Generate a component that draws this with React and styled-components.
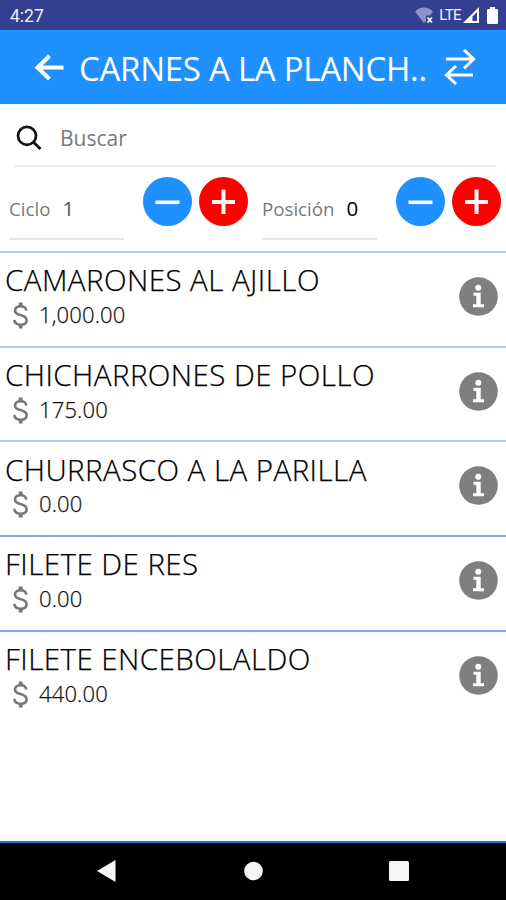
import React, { useState } from 'react';
import styled, { createGlobalStyle } from 'styled-components'

const GlobalStyle = createGlobalStyle`
  * {
    box-sizing: border-box;
  }
  body {
    margin: 0;
    background: #fff;
    font-family: 'Open Sans', 'Noto Sans', sans-serif;
  }
`

const Screen = styled.div`
  display: flex;
  flex-direction: column;
  width: 506px;
  height: 900px;
  overflow: hidden;
  background: #fff;
`;
const StatusBar = styled.div`
  display: flex;
  align-items: center;
  justify-content: space-between;
  height: 30px;
  padding: 2px 8px 0 10px;
  background: #343f92;
  color: #eef0fb;
  font-family: Roboto, sans-serif;
`;
const Clock = styled.span`
  font-size: 17.5px;
`;
const StatusIcons = styled.div`
  display: flex;
  align-items: center;
  padding-bottom: 2px;
`;
const Network = styled.span`
  margin: 0 2px 0 5px;
  font-size: 15px;
  letter-spacing: -0.6px;
`;
const Header = styled.header`
  display: flex;
  align-items: center;
  height: 74px;
  padding: 1px 30px 0 34px;
  background: #1e90ff;
  color: #fff;
`;
const Title = styled.h1`
  flex: 1;
  margin: 2px 0 0 15px;
  font-size: 33px;
  font-weight: 400;
  line-height: 44px;
  letter-spacing: -0.27px;
  white-space: nowrap;
`;
const SearchBar = styled.label`
  display: flex;
  align-items: center;
  height: 63px;
  margin: 0 10px 0 14px;
  padding: 7px 0 0 2px;
  border-bottom: 2px solid #efefef;
`;
const SearchInput = styled.input`
  flex: 1;
  margin-left: 18px;
  padding: 0;
  border: 0;
  outline: 0;
  background: none;
  font: 400 21px 'Open Sans', sans-serif;
  color: #222;
  &::placeholder {
    color: #7a7a7a;
    opacity: 1;
  }
`;
const Counters = styled.div`
  display: grid;
  grid-template-columns: 253px 253px;
  height: 84px;
  padding-top: 10px;
`;
const CounterGroup = styled.div`
  display: flex;
  align-items: flex-start;
  padding-left: 9px;
`;
const Field = styled.div`
  display: flex;
  flex: none;
  align-items: baseline;
  width: 115px;
  height: 63px;
  margin-right: 19px;
  padding-top: 17px;
  border-bottom: 2px solid #e6e6e6;
  line-height: 28px;
  white-space: nowrap;
`;
const FieldLabel = styled.span`
  margin-right: 12px;
  font-size: 18.700px;
  color: #7a7a7a;
`;
const FieldValue = styled.span`
  font-size: 20.500px;
  color: ${({ $muted }) => $muted ? '#555' : '#000'};
`;
const RoundButton = styled.button`
  display: flex;
  flex: none;
  align-items: center;
  justify-content: center;
  width: 49px;
  height: 49px;
  margin-right: 7px;
  padding: 0;
  border: 0;
  border-radius: 50%;
  background: ${({ $color }) => $color};
`;
const DishList = styled.ul`
  flex: 1;
  margin: 0;
  padding: 0;
  list-style-type: none;
`;
const DishItem = styled.li`
  display: flex;
  align-items: center;
  justify-content: space-between;
  height: 94.7px;
  padding: 0 8px 6px 5px;
  border-top: 2px solid #b0c8fb;
  &:nth-child(n + 4) {
    border-top-color: #7cabf0;
  }
`;
const DishText = styled.div`
  -webkit-text-stroke: 0.25px;
`;
const DishName = styled.div`
  font-size: 29.5px;
  font-weight: 300;
  line-height: 38px;
  letter-spacing: 0.45px;
  color: #000;
  white-space: nowrap;
`;
const DishPrice = styled.div`
  display: flex;
  align-items: center;
  height: 32px;
  padding-left: 8px;
  font-size: 22px;
  font-weight: 300;
  letter-spacing: 0.15px;
  color: #111;
`;
const Amount = styled.span`
  margin-left: 11px;
  padding-bottom: 3px;
`;
const NavBar = styled.nav`
  display: flex;
  align-items: center;
  justify-content: space-between;
  height: 59px;
  padding: 0 97px 1px;
  border-top: 2px solid #2674bd;
  background: #000;
`;

const WifiIcon = () => (
  <svg width="19" height="17" viewBox="0 0 19 17">
    <path d="M0 4.5C5-0.7 13-0.7 18 4.5L15 8.5H11V14L9 16Z" fill="#8c93c6" />
    <path d="M12.5 10.5l4.5 5M17 10.5l-4.5 5" stroke="#fff" strokeWidth="1.8" />
  </svg>
)

const SignalIcon = () => (
  <svg width="16" height="16" viewBox="0 0 16 16">
    <path d="M0 16L16 0V16Z" fill="#fff" />
    <path d="M9.5 9.5L14 5V14H9.5Z" fill="#343f92" />
  </svg>
)

const BatteryIcon = styled(({ className }) => (
  <svg className={className} width="11" height="17" viewBox="0 0 11 17">
    <path d="M3 0h5v2h2.2l.8.8v13.4l-.8.8H.8L0 16.2V2.8L.8 2H3z" fill="#fff" />
  </svg>
))`
  margin-left: 8px;
`;

const BackIcon = () => (
  <svg width="30" height="28" viewBox="0 0 30 28" fill="none" stroke="#fff" strokeWidth="4">
    <path d="M15.5 2L3.5 13.5L15.5 25M3.5 13.5H29.5" />
  </svg>
)

const SwapIcon = () => (
  <svg width="32" height="38" viewBox="0 0 32 38" fill="none" stroke="#fff" strokeWidth="3">
    <path d="M2 10H29M20 1L29.5 10L20 19.5" />
    <path d="M29 26H2.500M12 17L2.500 26L12 35" />
  </svg>
)

const SearchIcon = () => (
  <svg width="26" height="26" viewBox="0 0 26 26" fill="none" stroke="#111" strokeWidth="2.7">
    <circle cx="11" cy="10.8" r="9" />
    <path d="M17.2 17L24.5 24" strokeWidth="3" />
  </svg>
)

const MinusIcon = () => (
  <svg width="25" height="25" viewBox="0 0 25 25">
    <path d="M0.5 13.3H24.5" stroke="#fff" strokeWidth="3.6" />
  </svg>
)

const PlusIcon = () => (
  <svg width="25" height="25" viewBox="0 0 25 25">
    <path d="M1 13H24M12.5 0.5V25" stroke="#fff" strokeWidth="4" />
  </svg>
)

const DollarIcon = () => (
  <svg width="15" height="27" viewBox="0 0 15 27" fill="none" stroke="#777" strokeWidth="2.6">
    <path d="M13.3 8.7C13 5.7 10.8 4.2 7.7 4.2C4.3 4.2 2 5.7 2 8.4C2 11.2 4.3 12.2 7.6 13.1C11.5 14.2 13.6 15.5 13.6 18.2C13.6 21 11.2 22.7 7.7 22.7C4 22.7 1.6 21 1.3 17.9" />
    <path d="M7.7 0.5V4.5M7.7 22.5V26.5" strokeWidth="3.8" />
  </svg>
)

const InfoIcon = () => (
  <svg width="39" height="39" viewBox="0 0 39 39">
    <circle cx="19.5" cy="19.5" r="19.3" fill="#7f7f7f" />
    <circle cx="19.3" cy="10.8" r="3" fill="#fff" />
    <path d="M14.5 15.7H21.7V27.2H25V30.3H14V27.2H17.3V18.8H14.5Z" fill="#fff" />
  </svg>
)

const DISHES = [
  { name: 'CAMARONES AL AJILLO', price: '1,000.00' },
  { name: 'CHICHARRONES DE POLLO', price: '175.00' },
  { name: 'CHURRASCO A LA PARILLA', price: '0.00' },
  { name: 'FILETE DE RES', price: '0.00' },
  { name: 'FILETE ENCEBOLALDO', price: '440.00' },
]

const Counter = ({ label, value, muted, onChange }) => (
  <CounterGroup>
    <Field>
      <FieldLabel>{label}</FieldLabel>
      <FieldValue $muted={muted}>{value}</FieldValue>
    </Field>
    <RoundButton $color="#1e90ff" onClick={() => onChange(value - 1)}><MinusIcon /></RoundButton>
    <RoundButton $color="#ff0000" onClick={() => onChange(value + 1)}><PlusIcon /></RoundButton>
  </CounterGroup>
)

const App = () => {
  const [ search, setSearch ] = useState('')
  const [ cycle, setCycle ] = useState(1)
  const [ position, setPosition ] = useState(0)

  const dishes = DISHES.filter(d => d.name.includes(search.toUpperCase()))

  return (
    <Screen>
      <GlobalStyle />

      <StatusBar>
        <Clock>4:27</Clock>
        <StatusIcons>
          <WifiIcon />
          <Network>LTE</Network>
          <SignalIcon />
          <BatteryIcon />
        </StatusIcons>
      </StatusBar>

      <Header>
        <BackIcon />
        <Title>CARNES A LA PLANCH..</Title>
        <SwapIcon />
      </Header>

      <SearchBar>
        <SearchIcon />
        <SearchInput
          placeholder="Buscar"
          value={search}
          onChange={e => setSearch(e.target.value)}
        />
      </SearchBar>

      <Counters>
        <Counter label="Ciclo" value={cycle} muted onChange={setCycle} />
        <Counter label="Posición" value={position} onChange={setPosition} />
      </Counters>

      <DishList>
        {dishes.map((d, i) =>
          <DishItem key={i}>
            <DishText>
              <DishName>{d.name}</DishName>
              <DishPrice>
                <DollarIcon />
                <Amount>{d.price}</Amount>
              </DishPrice>
            </DishText>
            <InfoIcon />
          </DishItem>
        )}
      </DishList>

      <NavBar>
        <svg width="19" height="22" viewBox="0 0 19 22">
          <path d="M0 11L18.5 0V22Z" fill="#f5f5f5" />
        </svg>
        <svg width="21" height="20" viewBox="0 0 21 20">
          <circle cx="11.5" cy="10" r="9.3" fill="#f5f5f5" />
        </svg>
        <svg width="20" height="20" viewBox="0 0 20 20">
          <rect width="20" height="20" rx="1.5" fill="#f5f5f5" />
        </svg>
      </NavBar>
    </Screen>
  )
}

export default App
